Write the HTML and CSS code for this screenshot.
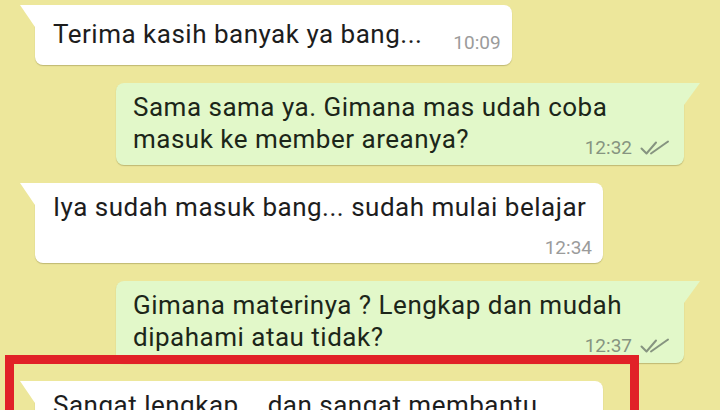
FILE: index.html
```html
<!DOCTYPE html>
<html lang="id">
<head>
  <meta charset="UTF-8" />
  <meta name="viewport" content="width=device-width, initial-scale=1.0" />
  <title>Chat</title>
  <link rel="stylesheet" href="styles.css">
</head>
<body>
  <div class="chat">
    <div class="bubble in single">
      <span class="text">Terima kasih banyak ya bang...</span><span class="meta">10:09</span>
    </div>

    <div class="bubble out">
      <span class="text">Sama sama ya. Gimana mas udah coba masuk ke member areanya?</span><span class="meta">12:32
        <svg class="ticks" viewBox="0 0 30 15" width="30" height="15"><path d="M1.5 8.5 L6.5 13.5 L16 2.5"/><path d="M11 13.5 L28 1.5"/></svg>
      </span>
    </div>

    <div class="bubble in">
      <span class="text">Iya sudah masuk bang... sudah mulai belajar</span><span class="meta">12:34</span>
    </div>

    <div class="bubble out">
      <span class="text">Gimana materinya ? Lengkap dan mudah dipahami atau tidak?</span><span class="meta">12:37
        <svg class="ticks" viewBox="0 0 30 15" width="30" height="15"><path d="M1.5 8.5 L6.5 13.5 L16 2.5"/><path d="M11 13.5 L28 1.5"/></svg>
      </span>
    </div>

    <div class="bubble in">
      <span class="text">Sangat lengkap... dan sangat membantu</span><span class="meta">12:38</span>
    </div>
  </div>

  <!-- red highlight box drawn over the last message -->
  <div class="highlight"></div>
</body>
</html>
```

FILE: styles.css
```css
html, body {
  height: 100%;
  overflow: hidden;
}

body {
  margin: 0;
  background: #ede79b;
  font-family: Roboto, "Noto Sans", sans-serif;
  color: #1d1d1d;
}

/* Chat column */
.chat {
  display: flex;
  flex-direction: column;
  gap: 18px;
  padding-top: 5px;
}

.bubble {
  position: relative;
  box-sizing: border-box;
  max-width: 568px;
  padding: 8px 11px 6px 18px;
  font-size: 26px;
  letter-spacing: 0.5px;
  line-height: 32px;
  border-radius: 8px;
  box-shadow: 0 1px 1px rgba(110, 100, 40, 0.35);
}

.bubble.in {
  align-self: flex-start;
  margin-left: 35px;
  background: #ffffff;
  border-top-left-radius: 0;
}

.bubble.out {
  align-self: flex-end;
  margin-right: 36px;
  padding: 8px 14px 8px 17px;
  background: #e2f8c9;
  color: #1c2619;
  border-top-right-radius: 0;
}

.bubble.single {
  padding-top: 13px;
  padding-bottom: 13px;
}

/* little tails at the top corners */
.bubble.in::before {
  content: "";
  position: absolute;
  top: 0;
  left: -15px;
  border-top: 22px solid #ffffff;
  border-left: 15px solid transparent;
}

.bubble.out::before {
  content: "";
  position: absolute;
  top: 0;
  right: -16px;
  border-top: 22px solid #e2f8c9;
  border-right: 16px solid transparent;
}

/* time + ticks */
.meta {
  float: right;
  display: flex;
  align-items: center;
  gap: 8px;
  margin: 15px 0 0 31px;
  font-size: 19px;
  letter-spacing: 0;
  line-height: 19px;
  color: #9b9b9b;
}

.out .meta {
  color: #869480;
}

.ticks {
  fill: none;
  stroke: #869480;
  stroke-width: 2;
  stroke-linecap: round;
  stroke-linejoin: round;
}

/* Annotation box */
.highlight {
  position: absolute;
  left: 5px;
  top: 355px;
  width: 634px;
  height: 120px;
  box-sizing: border-box;
  border: 9px solid #e12127;
}
```
